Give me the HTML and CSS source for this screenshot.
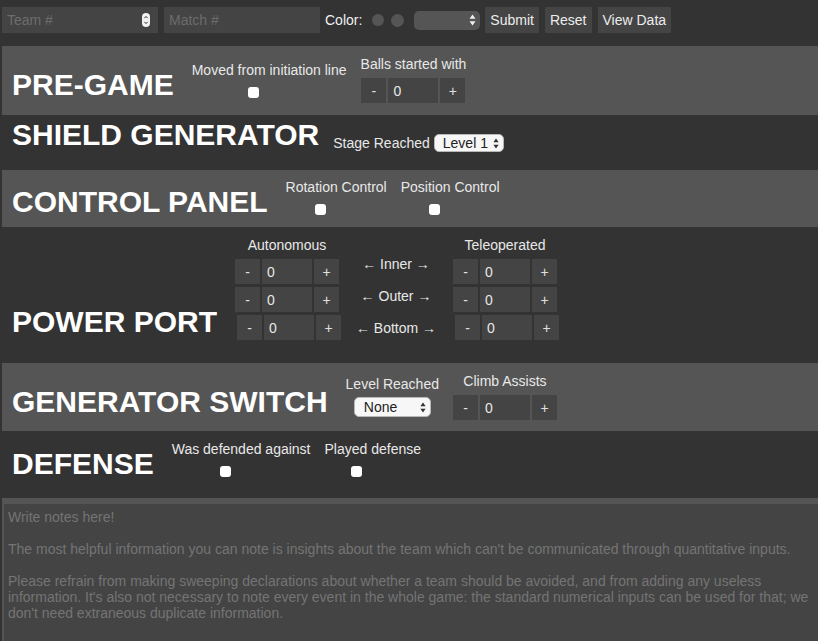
FILE: index.html
```html
<!DOCTYPE html>
<html lang="en">
<head>
<meta charset="utf-8">
<title>Scouting</title>
<link rel="stylesheet" href="styles.css">
</head>
<body>
<div class="page">
  <header class="topbar">
    <div class="num-field">
      <input class="num-input" type="text" placeholder="Team #">
      <svg class="spinner" width="8" height="14" viewBox="0 0 8 14"><rect x="0" y="0" width="8" height="14" rx="4" fill="#f2f2f2"/><path d="M2.3 5.2 L4 3.4 L5.7 5.2 M2.3 8.8 L4 10.6 L5.7 8.8" fill="none" stroke="#333" stroke-width="1"/></svg>
    </div>
    <input class="text-field" type="text" placeholder="Match #">
    <span class="color-label">Color:</span>
    <span class="dot"></span>
    <span class="dot dot-second"></span>
    <div class="dark-select">
      <select class="bare-select"><option></option></select>
      <svg width="7" height="12" viewBox="0 0 7 12"><path d="M3.5 0.5 L6.5 4.8 H0.5Z M3.5 11.5 L6.5 7.2 H0.5Z" fill="#f0f0f0"/></svg>
    </div>
    <button class="btn btn-first">Submit</button>
    <button class="btn">Reset</button>
    <button class="btn">View Data</button>
  </header>

  <section class="sec light sec-pregame">
    <h1 class="sec-title">PRE-GAME</h1>
    <div class="check-group">
      <span class="lbl">Moved from initiation line</span>
      <input class="check" type="checkbox">
    </div>
    <div class="counter-group">
      <span class="lbl">Balls started with</span>
      <div class="counter"><button class="step">-</button><input class="count" value="0"><button class="step">+</button></div>
    </div>
  </section>

  <section class="sec sec-shield">
    <h1 class="sec-title">SHIELD GENERATOR</h1>
    <div class="stage">
      <span class="lbl">Stage Reached</span>
      <div class="pick pick-level">
        <select class="bare-select dark-text"><option>Level 1</option></select>
        <svg width="6" height="11" viewBox="0 0 6 11"><path d="M3 0.5 L5.6 4.3 H0.4Z M3 10.5 L5.6 6.7 H0.4Z" fill="#333"/></svg>
      </div>
    </div>
  </section>

  <section class="sec light sec-control">
    <h1 class="sec-title">CONTROL PANEL</h1>
    <div class="check-group">
      <span class="lbl">Rotation Control</span>
      <input class="check" type="checkbox">
    </div>
    <div class="check-group">
      <span class="lbl">Position Control</span>
      <input class="check" type="checkbox">
    </div>
  </section>

  <section class="sec sec-power">
    <h1 class="sec-title">POWER PORT</h1>
    <div class="power">
      <div class="power-col">
        <span class="lbl col-head">Autonomous</span>
        <div class="counter"><button class="step">-</button><input class="count" value="0"><button class="step">+</button></div>
        <div class="counter"><button class="step">-</button><input class="count" value="0"><button class="step">+</button></div>
        <div class="counter counter-shift"><button class="step">-</button><input class="count" value="0"><button class="step">+</button></div>
      </div>
      <div class="power-labels">
        <span class="arrow-label">&larr; Inner &rarr;</span>
        <span class="arrow-label">&larr; Outer &rarr;</span>
        <span class="arrow-label">&larr; Bottom &rarr;</span>
      </div>
      <div class="power-col">
        <span class="lbl col-head">Teleoperated</span>
        <div class="counter"><button class="step">-</button><input class="count" value="0"><button class="step">+</button></div>
        <div class="counter"><button class="step">-</button><input class="count" value="0"><button class="step">+</button></div>
        <div class="counter counter-shift"><button class="step">-</button><input class="count" value="0"><button class="step">+</button></div>
      </div>
    </div>
  </section>

  <section class="sec light sec-generator">
    <h1 class="sec-title">GENERATOR SWITCH</h1>
    <div class="select-group">
      <span class="lbl">Level Reached</span>
      <div class="pick pick-none">
        <select class="bare-select dark-text"><option>None</option></select>
        <svg width="6" height="11" viewBox="0 0 6 11"><path d="M3 0.5 L5.6 4.3 H0.4Z M3 10.5 L5.6 6.7 H0.4Z" fill="#333"/></svg>
      </div>
    </div>
    <div class="counter-group">
      <span class="lbl">Climb Assists</span>
      <div class="counter"><button class="step">-</button><input class="count" value="0"><button class="step">+</button></div>
    </div>
  </section>

  <section class="sec sec-defense">
    <h1 class="sec-title">DEFENSE</h1>
    <div class="check-group">
      <span class="lbl">Was defended against</span>
      <input class="check" type="checkbox">
    </div>
    <div class="check-group">
      <span class="lbl">Played defense</span>
      <input class="check" type="checkbox">
    </div>
  </section>

  <div class="notes">
    <textarea class="notes-area" placeholder="Write notes here!&#10;&#10;The most helpful information you can note is insights about the team which can't be communicated through quantitative inputs.&#10;&#10;Please refrain from making sweeping declarations about whether a team should be avoided, and from adding any useless information. It's also not necessary to note every event in the whole game: the standard numerical inputs can be used for that; we don't need extraneous duplicate information."></textarea>
  </div>
</div>
</body>
</html>
```

FILE: styles.css
```css
* {
  box-sizing: border-box;
}

html, body {
  margin: 0;
  background: #333333;
  overflow: hidden;
}

body {
  color: #e8e8e8;
  font: 14px/16px "Liberation Sans", Arial, sans-serif;
}

.page {
  padding-left: 2px;
}

/* ---------- top bar ---------- */
.topbar {
  display: flex;
  align-items: center;
  height: 26px;
  margin: 7px 0 13px;
}

.num-field {
  display: flex;
  align-items: center;
  width: 156px;
  height: 26px;
  background: #444444;
  padding: 0 8px 0 5px;
}

.num-input,
.text-field,
.count {
  border: 0;
  outline: none;
  color: #e8e8e8;
  font: inherit;
  background: #444444;
}

.num-input {
  flex: 1;
  min-width: 0;
  padding: 0;
  background: transparent;
}

.spinner {
  flex: none;
}

.text-field {
  width: 156px;
  height: 26px;
  padding: 0 5px;
  margin-left: 6px;
}

.num-input::placeholder,
.text-field::placeholder {
  color: #6c6c6c;
  opacity: 1;
}

.color-label {
  margin-left: 5px;
  color: #f0f0f0;
}

.dot {
  width: 12px;
  height: 12px;
  border-radius: 50%;
  background: #555555;
  margin-left: 10px;
}

.dot-second {
  margin-left: 7px;
  width: 13px;
  height: 13px;
}

.dark-select {
  display: flex;
  align-items: center;
  width: 66px;
  height: 19px;
  margin-left: 10px;
  padding: 0 4px 0 6px;
  background: #555555;
  border-radius: 5px;
}

.bare-select {
  appearance: none;
  -webkit-appearance: none;
  flex: 1;
  min-width: 0;
  border: 0;
  padding: 0;
  margin: 0;
  background: transparent;
  color: #e8e8e8;
  font: inherit;
  outline: none;
}

.btn {
  height: 26px;
  padding: 0 5px;
  margin-left: 6px;
  border: 0;
  background: #444444;
  color: #ececec;
  font: inherit;
}

.btn-first {
  margin-left: 5px;
}

/* ---------- sections ---------- */
.sec {
  display: flex;
  align-items: flex-end;
  gap: 14px;
  padding-left: 10px;
}

.light {
  background: #555555;
}

.sec-title {
  margin: 0 4px 3px 0;
  font-size: 30px;
  line-height: 30px;
  font-weight: bold;
  color: #ffffff;
  white-space: nowrap;
}

.sec-pregame { padding-top: 10px; padding-bottom: 12px; }
.sec-shield { padding-top: 5px; padding-bottom: 17px; }
.sec-control { padding-top: 9px; padding-bottom: 7px; }
.sec-power { padding-top: 10px; padding-bottom: 23px; }
.sec-generator { padding-top: 10px; padding-bottom: 11px; }
.sec-defense { padding-top: 10px; padding-bottom: 16px; }

.lbl {
  white-space: nowrap;
  color: #e8e8e8;
}

/* checkbox groups */
.check-group {
  display: flex;
  flex-direction: column;
  align-items: center;
  margin-bottom: 5px;
}

.check {
  appearance: none;
  -webkit-appearance: none;
  width: 11px;
  height: 11px;
  margin: 9px 32px 0 0;
  background: #ffffff;
  border-radius: 3px;
  border: 0;
}

/* counters */
.counter-group {
  display: flex;
  flex-direction: column;
  align-items: center;
}

.counter-group .counter {
  margin-top: 6px;
}

.counter {
  display: flex;
  gap: 2px;
  height: 25px;
}

.step {
  width: 25px;
  height: 25px;
  padding: 0;
  border: 0;
  background: #444444;
  color: #e0e0e0;
  font: inherit;
}

.count {
  width: 50px;
  height: 25px;
  padding: 0 5px;
}

/* select pickers */
.stage {
  display: flex;
  align-items: baseline;
  gap: 4px;
  margin-left: -4px;
  margin-bottom: 1px;
}

.pick {
  display: flex;
  align-items: center;
  background: #f7f7f7;
  border: 1px solid #b8b8b8;
  border-radius: 5px;
  padding: 0 4px 0 8px;
}

.pick-level {
  width: 70px;
  height: 18px;
}

.pick-none {
  width: 77px;
  height: 20px;
  padding-left: 9px;
}

.dark-text {
  color: #222222;
}

.select-group {
  display: flex;
  flex-direction: column;
  align-items: center;
  margin-bottom: 3px;
}

.select-group .pick {
  margin-top: 5px;
}

/* power port */
.power {
  display: flex;
  align-items: flex-end;
}

.power-col {
  display: flex;
  flex-direction: column;
  align-items: center;
  gap: 3px;
  width: 104px;
}

.col-head {
  margin-bottom: 3px;
}

.counter-shift {
  margin-left: 4px;
}

.power-labels {
  display: flex;
  flex-direction: column;
  width: 114px;
  margin-bottom: -4px;
  text-align: center;
}

.arrow-label {
  line-height: 32px;
  white-space: nowrap;
  color: #e8e8e8;
}

/* notes */
.notes {
  background: #555555;
  padding: 6px 0 0 2px;
}

.notes-area {
  display: block;
  width: 100%;
  height: 200px;
  margin: 0;
  padding: 5px 5px 0 4px;
  border: 0;
  background: #444444;
  color: #e8e8e8;
  font: 14px/16px "Liberation Sans", Arial, sans-serif;
  resize: none;
  outline: none;
}

.notes-area::placeholder {
  color: #747474;
  opacity: 1;
}
```
